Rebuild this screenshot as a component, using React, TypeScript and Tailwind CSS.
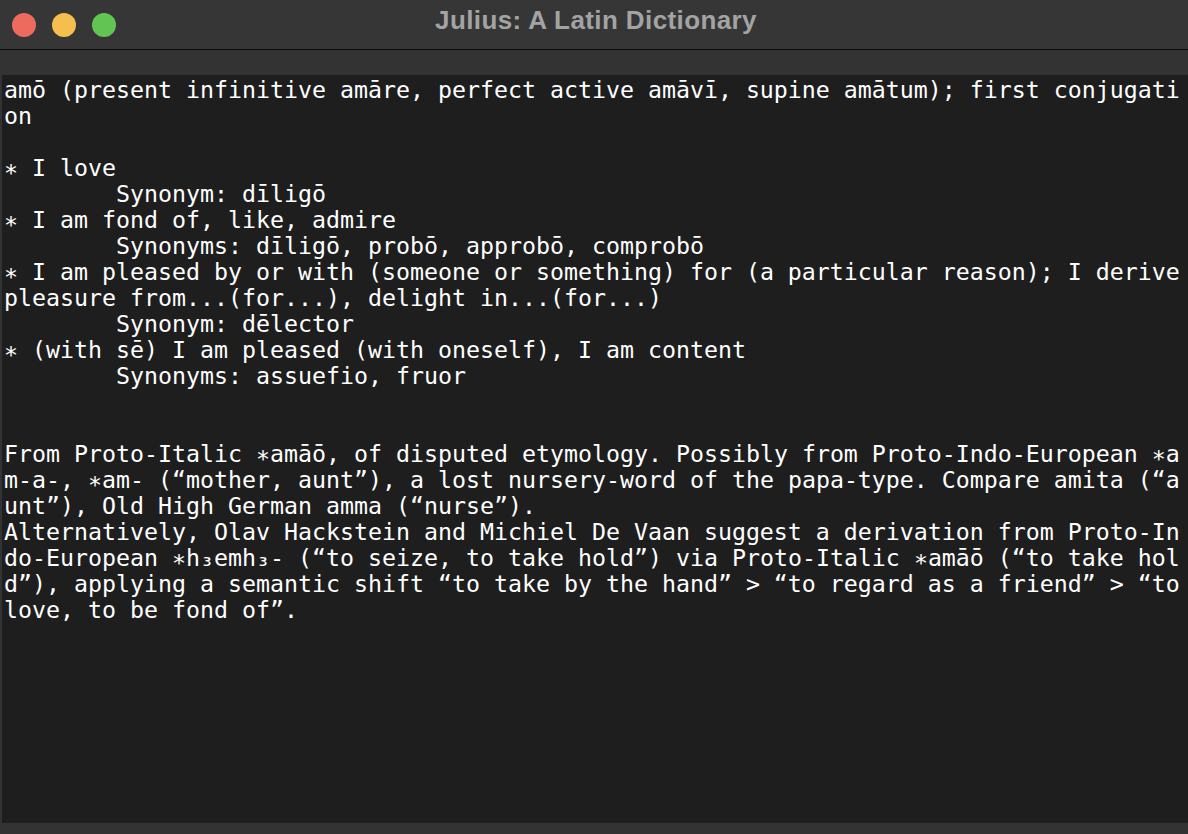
import React from 'react';

const entry = [
    'amō (present infinitive amāre, perfect active amāvī, supine amātum); first conjugation',
    '',
    '* I love',
    '\tSynonym: dīligō',
    '* I am fond of, like, admire',
    '\tSynonyms: dīligō, probō, approbō, comprobō',
    '* I am pleased by or with (someone or something) for (a particular reason); I derive pleasure from...(for...), delight in...(for...)',
    '\tSynonym: dēlector',
    '* (with sē) I am pleased (with oneself), I am content',
    '\tSynonyms: assuefio, fruor',
    '',
    '',
    'From Proto-Italic *amāō, of disputed etymology. Possibly from Proto-Indo-European *am-a-, *am- (“mother, aunt”), a lost nursery-word of the papa-type. Compare amita (“aunt”), Old High German amma (“nurse”).',
    'Alternatively, Olav Hackstein and Michiel De Vaan suggest a derivation from Proto-Indo-European *h₃emh₃- (“to seize, to take hold”) via Proto-Italic *amāō (“to take hold”), applying a semantic shift “to take by the hand” > “to regard as a friend” > “to love, to be fond of”.',
].join('\n');

// the terminal font draws its asterisk lower than DejaVu does
const renderEntry = (text: string) =>
    text.split('*').flatMap((part, i) =>
        i === 0
            ? [part]
            : [<span key={i} className="relative top-[5px]">*</span>, part]
    );

export default function App() {
    return (
        <div className="w-[1188px] h-[834px] bg-[#333333] flex flex-col overflow-hidden">
            {/* Title bar */}
            <div className="h-[50px] bg-[#363636] border-b border-[#0c0c0c] flex items-center relative shrink-0">
                <div className="flex items-center gap-4 pl-3">
                    <span className="w-6 h-6 rounded-full bg-[#ec6a5e]" />
                    <span className="w-6 h-6 rounded-full bg-[#f4bf4f]" />
                    <span className="w-6 h-6 rounded-full bg-[#61c554]" />
                </div>
                <div className="absolute left-0 right-0 top-0 h-[40px] flex items-center justify-center pointer-events-none">
                    <span className="text-[26px] font-bold tracking-[0.4px] text-[#a3a3a3] font-['Liberation_Sans',Arial,sans-serif] pl-1">
                        Julius: A Latin Dictionary
                    </span>
                </div>
            </div>

            {/* Search strip */}
            <div className="h-[25px] bg-[#333333] shrink-0" />

            {/* Definition view */}
            <div className="flex-1 ml-[2px] bg-[#1e1e1e] pl-[2px] pt-[2px] min-h-0">
                <pre className="m-0 text-white text-[23.25px] leading-[26px] font-['DejaVu_Sans_Mono',monospace] whitespace-pre-wrap break-all [tab-size:8]">
                    {renderEntry(entry)}
                </pre>
            </div>

            <div className="h-[11px] shrink-0" />
        </div>
    );
}
